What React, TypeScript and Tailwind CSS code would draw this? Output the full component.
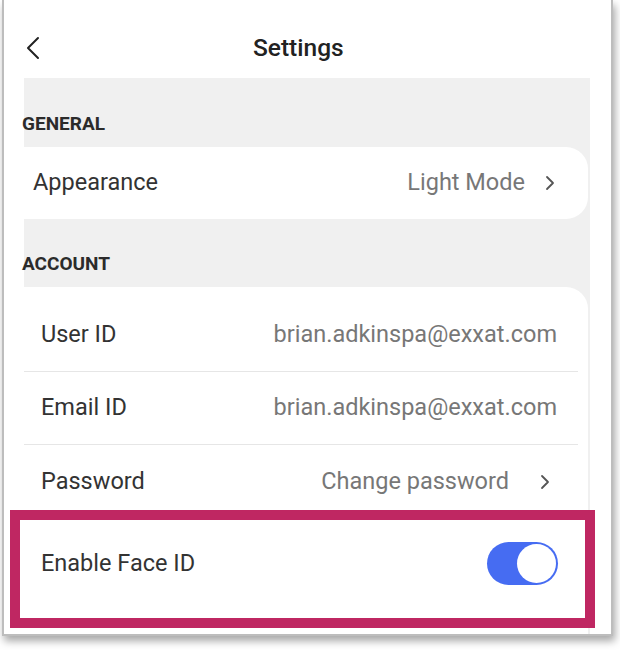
import React from "react";

const Chevron = ({ className }: { className?: string }) => (
  <svg className={className} width="10" height="16" viewBox="0 0 10 16" fill="none">
    <path d="M2 2 L8 8 L2 14" stroke="#555" strokeWidth="1.8" strokeLinecap="round" strokeLinejoin="round" />
  </svg>
);

export default function App() {
  return (
    <div
      className="relative w-[620px] h-[650px] bg-white overflow-hidden"
      style={{ fontFamily: "Roboto, 'Noto Sans', Arial, sans-serif" }}
    >
      <div className="ml-[2px] w-[611px] h-[636px] border-x-[2px] border-b-[2px] border-[#bdbdbd] bg-white shadow-[2px_5px_8px_rgba(0,0,0,0.35)] flex flex-col overflow-hidden">
        {/* header */}
        <div className="h-[78px] flex items-center shrink-0 pt-[18px]">
          <svg className="ml-[22px]" width="14" height="24" viewBox="0 0 14 24" fill="none">
            <path d="M12 2 L2 12 L12 22" stroke="#222" strokeWidth="2" strokeLinecap="round" strokeLinejoin="round" />
          </svg>
          <div className="ml-[213px] text-[24.5px] font-medium text-[#222] leading-none">Settings</div>
        </div>
        {/* gray content */}
        <div className="ml-[20px] w-[566px] flex-1 bg-[#f0f0f0] flex flex-col">
          <div className="h-[69px] flex items-end pb-[13px] -ml-[2px] text-[19px] font-bold text-[#2b2b2b] leading-[20px]">
            GENERAL
          </div>
          <div className="h-[72px] w-[564px] bg-white rounded-r-[22px] flex items-center pl-[9px] pr-[33px]">
            <span className="text-[23.5px] text-[#333]">Appearance</span>
            <span className="ml-auto text-[23.5px] text-[#777]">Light Mode</span>
            <Chevron className="ml-[20px]" />
          </div>
          <div className="h-[68px] flex items-end pb-[13px] -ml-[2px] text-[19px] font-bold text-[#2b2b2b] leading-[20px]">
            ACCOUNT
          </div>
          <div className="flex-1 w-[564px] bg-white rounded-tr-[22px] pt-[12px] flex flex-col">
            <div className="h-[73px] flex items-center pl-[17px] pr-[21px] border-b border-[#e6e6e6] mr-[10px]">
              <span className="text-[23.5px] text-[#333]">User ID</span>
              <span className="ml-auto text-[23.5px] text-[#777]">brian.adkinspa@exxat.com</span>
            </div>
            <div className="h-[73px] flex items-center pl-[17px] pr-[21px] border-b border-[#e6e6e6] mr-[10px]">
              <span className="text-[23.5px] text-[#333]">Email ID</span>
              <span className="ml-auto text-[23.5px] text-[#777]">brian.adkinspa@exxat.com</span>
            </div>
            <div className="h-[73px] flex items-center pl-[17px] pr-[28px] mr-[10px]">
              <span className="text-[23.5px] text-[#333]">Password</span>
              <span className="ml-auto text-[23.5px] text-[#777]">Change password</span>
              <Chevron className="ml-[31px]" />
            </div>
          </div>
        </div>
      </div>
      {/* highlight annotation */}
      <div className="absolute left-[10px] top-[510px] w-[585px] h-[118px] border-[10px] border-[#bf2762] bg-white">
        <div className="flex items-center h-[43px] mt-[22px] pl-[21px] pr-[27px]">
          <span className="text-[23.5px] text-[#333]">Enable Face ID</span>
          <div className="ml-auto w-[71px] h-[43px] rounded-full bg-[#466cf2] flex items-center justify-end pr-[2px]">
            <div className="w-[39px] h-[39px] rounded-full bg-white" />
          </div>
        </div>
      </div>
    </div>
  );
}
